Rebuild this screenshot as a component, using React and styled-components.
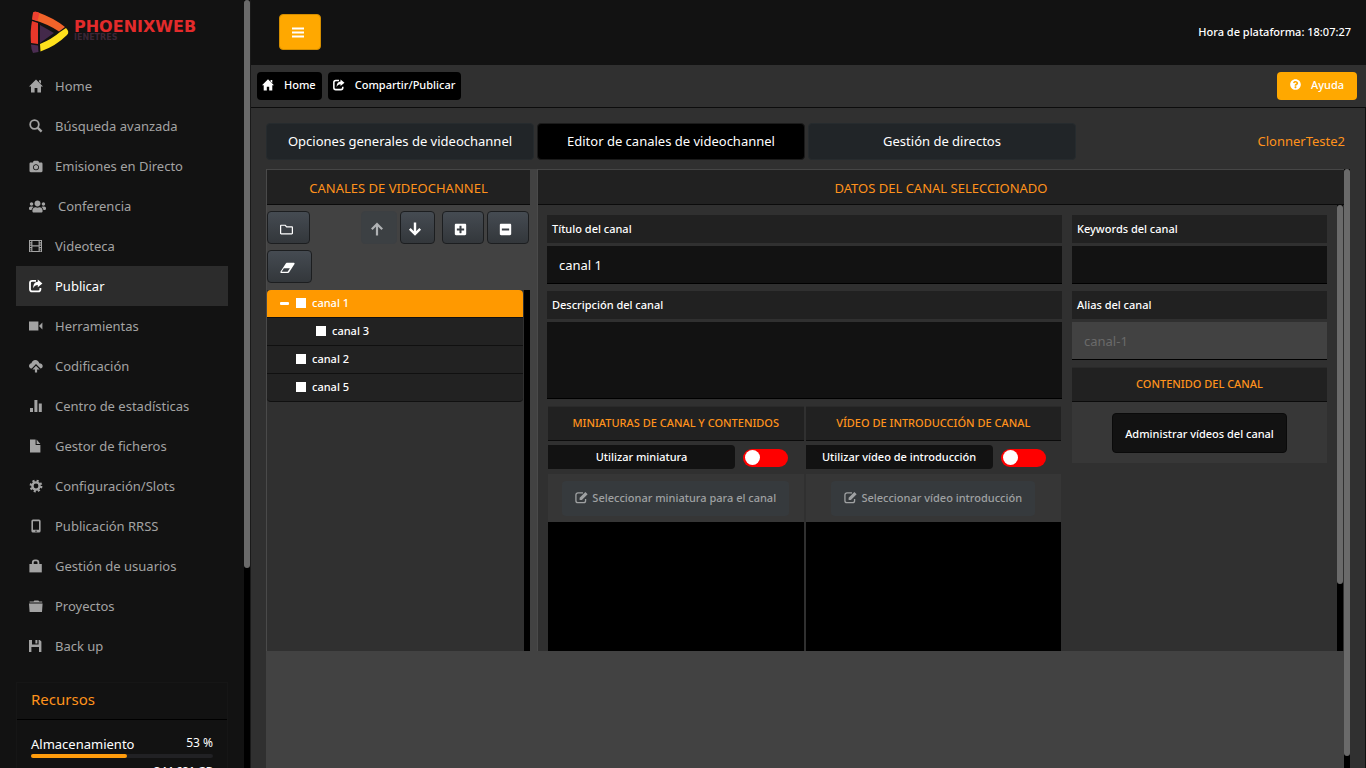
import React from 'react';
import styled, { createGlobalStyle, css } from 'styled-components';
import {
  FaUsers,
  FaPlusSquare,
  FaMinusSquare,
  FaQuestionCircle,
  FaRegFolder,
  FaCamera,
} from 'react-icons/fa';

const GlobalStyle = createGlobalStyle`
  * {
    box-sizing: border-box;
  }

  html, body, #root {
    height: 100%;
    margin: 0;
  }

  body {
    overflow: hidden;
    background: #2f2f2f;
    color: #fff;
    font-family: 'Noto Sans', sans-serif;
    font-size: 13px;
  }

  button, input, textarea {
    font-family: inherit;
  }

  svg {
    display: block;
    flex: none;
  }
`;

const Page = styled.div`
  display: flex;
  height: 100vh;
  overflow: hidden;
`;

const Sidebar = styled.aside`
  flex: none;
  display: flex;
  width: 250px;
  height: 100%;
  background: #121212;
  overflow: hidden;
`;

const SidebarContent = styled.div`
  flex: 1;
  padding: 0 16px;
`;

const ScrollTrack = styled.div`
  flex: none;
  width: 6px;
  background: #000;
`;

const ScrollThumb = styled.div`
  height: ${({ $size }) => $size};
  border-radius: 3px;
  background: #6a6a6a;
`;

const Logo = styled.a`
  display: flex;
  align-items: flex-start;
  height: 66px;
  padding: 11px 0 0 14px;
  gap: 4px;
  text-decoration: none;
`;

const LogoText = styled.div`
  padding-top: 9px;
  color: #e32b2b;
  font-family: 'DejaVu Sans', sans-serif;
  font-size: 16px;
  font-weight: bold;
  line-height: 14px;

  small {
    display: block;
    color: #3a2636;
    font-size: 8px;
    line-height: 8px;
  }
`;

const Nav = styled.nav`
  display: flex;
  flex-direction: column;
`;

const NavLink = styled.a`
  display: flex;
  align-items: center;
  gap: 12px;
  height: 40px;
  padding-left: 13px;
  color: ${({ $active }) => ($active ? '#fff' : '#a3a3a3')};
  background: ${({ $active }) => ($active ? '#2c2c2c' : 'transparent')};
  text-decoration: none;

  svg {
    min-width: 14px;
  }
`;

const Resources = styled.section`
  margin-top: 16px;
  border: 1px solid #161616;
`;

const ResourcesTitle = styled.h2`
  margin: 0;
  padding: 0 14px 3px;
  border-bottom: 1px solid #000;
  color: #ff921c;
  font-size: 15px;
  font-weight: 400;
  line-height: 33px;
`;

const Resource = styled.div`
  padding: 14px 14px 0;
`;

const ResourceLabel = styled.div`
  display: flex;
  justify-content: space-between;
  line-height: 20px;

  span {
    font-size: 12px;
    line-height: 18px;
  }
`;

const Bar = styled.div`
  height: 4px;
  border-radius: 2px;
  background: #212124;
`;

const BarFill = styled.div`
  height: 4px;
  border-radius: 2px;
  background: #ff9c0c;
`;

const ResourceDetail = styled.div`
  padding-top: 5px;
  font-size: 11px;
  font-weight: 600;
  line-height: 16px;
  text-align: right;
`;

const Main = styled.main`
  flex: 1;
  display: flex;
  flex-direction: column;
  min-width: 0;
  border-left: 1px solid #1a1a1a;
`;

const TopBar = styled.header`
  flex: none;
  display: flex;
  align-items: center;
  justify-content: space-between;
  height: 65px;
  padding: 0 15px 2px 28px;
  background: #121212;
  font-size: 11px;
  font-weight: 500;
`;

const MenuButton = styled.button`
  display: flex;
  align-items: center;
  width: 42px;
  height: 36px;
  padding: 0 0 0 11px;
  border: 1px solid #d38d00;
  border-radius: 4px;
  color: #fff;
  background: #ffa800;
`;

const Breadcrumbs = styled.div`
  flex: none;
  display: flex;
  align-items: center;
  gap: 6px;
  height: 43px;
  padding: 0 9px 0 6px;
  border-bottom: 1px solid #0c0c0c;
  background: #303030;
`;

const Crumb = styled.a`
  display: flex;
  align-items: center;
  gap: 10px;
  height: 28px;
  padding: 0 6px 3px 5px;
  border-radius: 4px;
  color: #fff;
  background: #000;
  font-size: 11px;
  font-weight: 500;
  text-decoration: none;
`;

const HelpButton = styled.button`
  display: flex;
  align-items: center;
  gap: 10px;
  height: 28px;
  margin-left: auto;
  padding: 0 13px 3px;
  border: none;
  border-radius: 4px;
  color: #fff;
  background: #ffa800;
  font-size: 11px;
  font-weight: 500;
`;

const Content = styled.div`
  flex: 1;
  display: flex;
  flex-direction: column;
  min-height: 0;
  padding: 15px 15px 0;
  border-right: 1px solid #111;
  background: #303030;
`;

const TabBar = styled.div`
  display: flex;
  align-items: center;
  gap: 3px;
`;

const Tab = styled.button`
  flex: 0 1 268px;
  height: 37px;
  padding: 0 0 2px;
  border: 1px solid ${({ $active }) => ($active ? '#1b1b1b' : '#262b2e')};
  border-radius: 4px;
  color: #fff;
  background: ${({ $active }) => ($active ? '#000' : '#212528')};
  font-size: 13px;
`;

const UserName = styled.span`
  margin-left: auto;
  padding: 0 5px 2px 0;
  color: #ff921c;
`;

const Workspace = styled.div`
  flex: 1;
  display: flex;
  min-height: 0;
  margin-top: 9px;
`;

const WorkspaceBody = styled.div`
  flex: 1;
  display: flex;
  align-items: flex-start;
  gap: 7px;
  min-width: 0;
  background: #424242;
`;

const Panel = styled.section`
  display: flex;
  flex-direction: column;
  height: 482px;
  min-width: 0;
  border-left: 1px solid #4a4a4a;
  background: #303030;
  ${({ $grow }) => ($grow ? 'flex: 1;' : 'flex: 0 0 264px;')}
`;

const PanelTitle = styled.h2`
  flex: none;
  margin: 0;
  padding-top: 2px;
  border-top: 1px solid #464646;
  border-bottom: 1px solid #0b0b0b;
  color: #ff921c;
  background: #212121;
  font-size: 13px;
  font-weight: 400;
  line-height: 32px;
  text-align: center;
`;

const SmallTitle = styled(PanelTitle)`
  padding: 0 0 2px;
  border-top-color: #2a2a2a;
  font-size: 11px;
  font-weight: 500;
  line-height: 31px;
`;

const Toolbar = styled.div`
  flex: none;
  display: flex;
  flex-wrap: wrap;
  align-content: flex-start;
  gap: 6px 3px;
  height: 85px;
  padding-top: 6px;
  background: #424242;
`;

const ToolButton = styled.button`
  display: flex;
  align-items: center;
  justify-content: center;
  width: ${({ $width }) => $width}px;
  height: 33px;
  margin-right: ${({ $gap }) => $gap || 0}px;
  padding: 3px 5px 0 0;
  border: 1px solid #1c1e20;
  border-radius: 4px;
  color: #fff;
  background: linear-gradient(#454b52, #33373b);

  &:disabled {
    border-color: #3c3f42;
    color: #b0b2b4;
    background: #3c4043;
  }
`;

const TreeArea = styled.div`
  flex: 1;
  display: flex;
`;

const Tree = styled.ul`
  flex: 1;
  margin: 0;
  padding: 0 1px 0 0;
  list-style: none;
`;

const TreeItem = styled.li`
  display: flex;
  align-items: center;
  gap: 5px;
  height: 28px;
  padding: 0 0 2px ${({ $level }) => 29 + $level * 20}px;
  border-bottom: 1px solid #101010;
  background: #222;
  font-size: 11px;
  font-weight: 500;

  &:last-child {
    border-radius: 0 0 4px 4px;
  }

  ${({ $selected }) =>
    $selected &&
    css`
      padding-left: 12px;
      border-radius: 4px 4px 0 0;
      background: #ff9900;
    `}

  label {
    display: flex;
    align-items: center;
    gap: 6px;
  }

  input {
    appearance: none;
    width: 10px;
    height: 10px;
    margin: 0;
    background: #fff;
  }
`;

const TreeToggle = styled.button`
  display: flex;
  width: 12px;
  padding: 0 1px;
  border: none;
  color: #fff;
  background: none;
`;

const FormArea = styled.div`
  flex: 1;
  display: flex;
  min-height: 0;
  padding-right: 1px;
`;

const Form = styled.form`
  flex: 1;
  display: grid;
  grid-template-columns: minmax(0, 515px) minmax(0, 255px);
  gap: 10px;
  padding: 10px 10px 0 9px;
  overflow: hidden;
`;

const Column = styled.div`
  display: flex;
  flex-direction: column;
`;

const FieldLabel = styled.label`
  height: 28px;
  padding-left: 5px;
  background: #212121;
  font-size: 11px;
  font-weight: 500;
  line-height: 28px;
`;

const fieldStyles = css`
  width: 100%;
  margin: 3px 0 7px;
  padding: 0 12px;
  border: none;
  border-bottom: 1px solid #000;
  border-radius: 0;
  outline: none;
  color: #fff;
  background: #121212;
  font-size: 13px;
`;

const TextInput = styled.input`
  ${fieldStyles}
  height: 38px;

  &:disabled {
    color: #6a6a6a;
    background: #424242;
  }
`;

const TextArea = styled.textarea`
  ${fieldStyles}
  height: 77px;
  resize: none;
`;

const MediaRow = styled.div`
  display: grid;
  grid-template-columns: 1fr 1fr;
  gap: 2px;
  padding: 0 1px;
`;

const Media = styled.div`
  display: flex;
  flex-direction: column;
`;

const SwitchRow = styled.div`
  display: flex;
  align-items: center;
  gap: 8px;
  height: 33px;
  padding-bottom: 2px;
`;

const SwitchLabel = styled.label`
  width: 187px;
  border-radius: 0 4px 4px 0;
  background: #121212;
  font-size: 11px;
  font-weight: 500;
  line-height: 24px;
  text-align: center;
`;

const Switch = styled.input`
  appearance: none;
  display: flex;
  align-items: center;
  width: 45px;
  height: 18px;
  margin: 2px 0 0;
  padding-left: 2px;
  border-radius: 9px;
  background: #f00;

  &::before {
    content: '';
    width: 15px;
    height: 15px;
    border-radius: 50%;
    background: #fff;
  }
`;

const MediaAction = styled.div`
  display: flex;
  align-items: center;
  justify-content: center;
  height: 48px;
  background: #363636;
`;

const SelectButton = styled.button`
  display: flex;
  align-items: center;
  gap: 4px;
  height: 35px;
  padding: 0 13px 2px;
  border: none;
  border-radius: 4px;
  color: #9fa1a2;
  background: #363a3d;
  font-size: 11px;
  font-weight: 500;
`;

const Preview = styled.div`
  height: 140px;
  background: #000;
`;

const ChannelContent = styled.div`
  height: 96px;
  background: #373737;
  text-align: center;
`;

const ManageButton = styled.button`
  height: 40px;
  margin-top: 11px;
  padding: 0 12px;
  border: 1px solid #0a0a0a;
  border-radius: 4px;
  color: #fff;
  background: #121212;
  font-size: 11px;
  font-weight: 500;
`;

const Glyph = ({ children, size = 14 }) => (
  <svg width={size} height={size} viewBox="0 0 14 14" fill="currentColor" aria-hidden="true">
    {children}
  </svg>
);

const HomeIcon = ({ size }) => (
  <Glyph size={size}>
    <path d="M7 .4 14 7.400H12V13.400H8.400V9H5.600v4.400H2V7.400H0zM10 1.200h2v3.600l-2-2z" />
  </Glyph>
);

const SearchIcon = () => (
  <Glyph>
    <circle cx="5.5" cy="5.5" r="4.3" fill="none" stroke="currentColor" strokeWidth="1.8" />
    <path d="M8.6 8.6 12.6 12.6" stroke="currentColor" strokeWidth="2.4" />
  </Glyph>
);

const FilmIcon = () => (
  <Glyph>
    <path
      fillRule="evenodd"
      d="M0 1h13v12H0zM1 2v1.2h1.3V2zM1 4.4v1.2h1.3V4.4zM1 6.8V8h1.3V6.8zM1 9.2v1.2h1.3V9.2zM1 11.3v1h1.3v-1zM10.7 2v1.2H12V2zM10.7 4.4v1.2H12V4.4zM10.7 6.8V8H12V6.8zM10.7 9.2v1.2H12V9.2zM10.7 11.3v1H12v-1zM3.4 2v4.2h6.2V2zM3.4 7.6V12h6.2V7.6z"
    />
  </Glyph>
);

const ShareIcon = ({ size }) => (
  <Glyph size={size}>
    <path
      d="M7 1.8H3.2A2.2 2.2 0 0 0 1 4v6.2a2.2 2.2 0 0 0 2.2 2.2h6a2.2 2.2 0 0 0 2.2-2.2V9"
      fill="none"
      stroke="currentColor"
      strokeWidth="1.8"
    />
    <path d="M8.8.6 13.4 4.4 8.8 8.2V6C6.6 6 5.4 7 4.2 9.2 4.2 5.4 5.8 3 8.8 2.8z" />
  </Glyph>
);

const VideoIcon = () => (
  <Glyph>
    <path d="M0 2.5h9.4v9H0zM10 7l3.4-3.6v7.2z" />
  </Glyph>
);

const CloudUploadIcon = () => (
  <Glyph>
    <path d="M2.800 9.600C1.200 9.400 0 8.300 0 6.900c0-1.400 1-2.500 2.400-2.700C2.900 2.300 4.400 1 6.300 1c2 0 3.600 1.300 4 3.200 1.900 0 3.400 1.200 3.400 2.800 0 1.300-.9 2.400-2.200 2.600L7 5z" />
    <path d="m7 6.700 3.600 3.700H8.100v3.200H5.900v-3.200H3.400z" />
  </Glyph>
);

const StatsIcon = () => (
  <Glyph>
    <path d="M1 9h3v4H1zM5.4 1h3v12h-3zM9.8 4.4h3V13h-3z" />
  </Glyph>
);

const FileIcon = () => (
  <Glyph>
    <path d="M1 .4h5.600V6H11.400v7.400H1zM7.600.4 11.400 5H7.600z" />
  </Glyph>
);

const CogIcon = () => (
  <Glyph>
    <circle cx="7" cy="7" r="5.200" fill="none" stroke="currentColor" strokeWidth="2.400" strokeDasharray="2.040 2.040" />
    <circle cx="7" cy="7" r="3.600" fill="none" stroke="currentColor" strokeWidth="2.400" />
  </Glyph>
);

const PhoneIcon = () => (
  <Glyph>
    <path
      fillRule="evenodd"
      d="M4 .5h6A1.6 1.6 0 0 1 11.6 2v10a1.6 1.6 0 0 1-1.6 1.5H4A1.6 1.6 0 0 1 2.4 12V2A1.6 1.6 0 0 1 4 .5zM4 2.2v8.6h6V2.2zM6 11.8v.8h2v-.8z"
    />
  </Glyph>
);

const LockIcon = () => (
  <Glyph>
    <path d="M.4 5h12.400v8.400H.4z" />
    <path
      d="M3.8 5.4V3.6c0-1.400.8-2.200 2.200-2.200h1.200c1.400 0 2.200.8 2.200 2.200v1.800"
      fill="none"
      stroke="currentColor"
      strokeWidth="1.8"
    />
  </Glyph>
);

const ProjectsIcon = () => (
  <Glyph>
    <path d="M.6 2.400h4l.8-1h4l.8 1h3v1.200H.6zM0 4.600h13.600L13 13H.6z" />
  </Glyph>
);

const SaveIcon = () => (
  <Glyph>
    <path d="M0 1h3v4.600h6.600V1h1.200L12.400 2.600V13H10V8H2.400v5H0zM6.400 1h2v3.600h-2z" />
  </Glyph>
);

const BarsIcon = () => (
  <Glyph>
    <path d="M1 2.500h12v2H1zM1 6.500h12v2H1zM1 10.500h12v2H1z" />
  </Glyph>
);

const ArrowUpIcon = () => (
  <Glyph>
    <path d="M7 13.400V2M1.800 7.200 7 2l5.200 5.200" fill="none" stroke="currentColor" strokeWidth="2.200" />
  </Glyph>
);

const ArrowDownIcon = () => (
  <Glyph>
    <path d="M7 .6V12M1.800 6.800 7 12l5.200-5.200" fill="none" stroke="currentColor" strokeWidth="2.400" />
  </Glyph>
);

const EraserIcon = () => (
  <svg width="15" height="14" viewBox="0 0 15 14" fill="currentColor" aria-hidden="true">
    <path fillRule="evenodd" d="M6.600 1.800H14Q15 2 14.500 3L9 11.400 8 12H1Q0 11.800.4 10.800L5.800 2.400zM3.900 7.200 1.600 10.800H7.600L9.900 7.200z" />
  </svg>
);

const EditIcon = () => (
  <Glyph size={13}>
    <path
      d="M8.600 2H3.200A2.200 2.200 0 0 0 1 4.200v6.200a2.200 2.200 0 0 0 2.200 2.200h6a2.200 2.200 0 0 0 2.200-2.200V8.600"
      fill="none"
      stroke="currentColor"
      strokeWidth="1.400"
    />
    <path d="M5 7.400 11.200 1.200 13.600 3.600 7.400 9.800H5z" />
  </Glyph>
);

const MinusIcon = () => (
  <svg width="10" height="10" viewBox="0 0 10 10" fill="currentColor" aria-hidden="true">
    <rect y="4" width="9" height="3" rx="1" />
  </svg>
);

const LogoMark = () => (
  <svg width="40" height="43" viewBox="0 0 40 43" aria-hidden="true">
    <path d="M10 14 24 22 10 32z" fill="#43294a" />
    <path d="M2 10 8 12V33L1 32Q0 20 2 10z" fill="#e8382a" />
    <path d="M1 33.500 8 34.500 8.500 41 3 42Q1 38 1 33.500z" fill="#4b2d52" />
    <path d="M3 2Q4 0 7 1 24 7 35 16L29 20.500Q18 13 2.300 8.500z" fill="#f1632a" />
    <path d="M3 2Q4 0 7 1L9.500 2 7.500 10 2.300 8.500z" fill="#ee4030" />
    <path d="M36 17q4 4 1 7Q26 35 10.500 40.500L10 33Q22 28 30 21z" fill="#ffe11c" />
  </svg>
);

const navItems = [
  { label: 'Home', icon: <HomeIcon /> },
  { label: 'Búsqueda avanzada', icon: <SearchIcon /> },
  { label: 'Emisiones en Directo', icon: <FaCamera size={13} /> },
  { label: 'Conferencia', icon: <FaUsers size={17} /> },
  { label: 'Videoteca', icon: <FilmIcon /> },
  { label: 'Publicar', icon: <ShareIcon />, active: true },
  { label: 'Herramientas', icon: <VideoIcon /> },
  { label: 'Codificación', icon: <CloudUploadIcon /> },
  { label: 'Centro de estadísticas', icon: <StatsIcon /> },
  { label: 'Gestor de ficheros', icon: <FileIcon /> },
  { label: 'Configuración/Slots', icon: <CogIcon /> },
  { label: 'Publicación RRSS', icon: <PhoneIcon /> },
  { label: 'Gestión de usuarios', icon: <LockIcon /> },
  { label: 'Proyectos', icon: <ProjectsIcon /> },
  { label: 'Back up', icon: <SaveIcon /> },
];

const channels = [
  { id: 1, name: 'canal 1', level: 0, selected: true },
  { id: 3, name: 'canal 3', level: 1 },
  { id: 2, name: 'canal 2', level: 0 },
  { id: 5, name: 'canal 5', level: 0 },
];

const storage = 53;

const MediaBlock = ({ id, title, switchLabel, action }) => (
  <Media>
    <SmallTitle as="h3">{title}</SmallTitle>
    <SwitchRow>
      <SwitchLabel htmlFor={id}>{switchLabel}</SwitchLabel>
      <Switch type="checkbox" role="switch" id={id} />
    </SwitchRow>
    <MediaAction>
      <SelectButton type="button">
        <EditIcon />
        {action}
      </SelectButton>
    </MediaAction>
    <Preview />
  </Media>
);

const App = () => (
  <Page>
    <GlobalStyle />
    <Sidebar>
      <SidebarContent>
        <Logo href="#">
          <LogoMark />
          <LogoText>
            PHOENIXWEB
            <small>IENETRES</small>
          </LogoText>
        </Logo>
        <Nav>
          {navItems.map(({ label, icon, active }) => (
            <NavLink key={label} href="#" $active={active}>
              {icon}
              {label}
            </NavLink>
          ))}
        </Nav>
        <Resources>
          <ResourcesTitle>Recursos</ResourcesTitle>
          <Resource>
            <ResourceLabel>
              Almacenamiento
              <span>{storage} %</span>
            </ResourceLabel>
            <Bar>
              <BarFill style={{ width: `${storage}%` }} />
            </Bar>
            <ResourceDetail>344.681 GB</ResourceDetail>
          </Resource>
        </Resources>
      </SidebarContent>
      <ScrollTrack>
        <ScrollThumb $size="74%" />
      </ScrollTrack>
    </Sidebar>
    <Main>
      <TopBar>
        <MenuButton type="button" aria-label="Menu">
          <BarsIcon />
        </MenuButton>
        <span>Hora de plataforma: 18:07:27</span>
      </TopBar>
      <Breadcrumbs>
        <Crumb href="#">
          <HomeIcon size={12} />
          Home
        </Crumb>
        <Crumb href="#">
          <ShareIcon size={12} />
          Compartir/Publicar
        </Crumb>
        <HelpButton type="button">
          <FaQuestionCircle size={11} />
          Ayuda
        </HelpButton>
      </Breadcrumbs>
      <Content>
        <TabBar>
          <Tab type="button">Opciones generales de videochannel</Tab>
          <Tab type="button" $active>
            Editor de canales de videochannel
          </Tab>
          <Tab type="button">Gestión de directos</Tab>
          <UserName>ClonnerTeste2</UserName>
        </TabBar>
        <Workspace>
          <WorkspaceBody>
            <Panel>
              <PanelTitle>CANALES DE VIDEOCHANNEL</PanelTitle>
              <Toolbar>
                <ToolButton type="button" $width={43} $gap={48} aria-label="Carpeta">
                  <FaRegFolder size={13} />
                </ToolButton>
                <ToolButton type="button" $width={36} disabled aria-label="Subir">
                  <ArrowUpIcon />
                </ToolButton>
                <ToolButton type="button" $width={35} $gap={4} aria-label="Bajar">
                  <ArrowDownIcon />
                </ToolButton>
                <ToolButton type="button" $width={42} aria-label="Añadir">
                  <FaPlusSquare size={13} />
                </ToolButton>
                <ToolButton type="button" $width={42} aria-label="Quitar">
                  <FaMinusSquare size={13} />
                </ToolButton>
                <ToolButton type="button" $width={45} aria-label="Borrar">
                  <EraserIcon />
                </ToolButton>
              </Toolbar>
              <TreeArea>
                <Tree>
                  {channels.map(({ id, name, level, selected }) => (
                    <TreeItem key={id} $level={level} $selected={selected}>
                      {selected && (
                        <TreeToggle type="button" aria-label="Contraer">
                          <MinusIcon />
                        </TreeToggle>
                      )}
                      <label>
                        <input type="checkbox" />
                        {name}
                      </label>
                    </TreeItem>
                  ))}
                </Tree>
                <ScrollTrack />
              </TreeArea>
            </Panel>
            <Panel $grow>
              <PanelTitle>DATOS DEL CANAL SELECCIONADO</PanelTitle>
              <FormArea>
                <Form>
                  <Column>
                    <FieldLabel htmlFor="title">Título del canal</FieldLabel>
                    <TextInput id="title" defaultValue="canal 1" />
                    <FieldLabel htmlFor="description">Descripción del canal</FieldLabel>
                    <TextArea id="description" />
                    <MediaRow>
                      <MediaBlock
                        id="thumbnail"
                        title="MINIATURAS DE CANAL Y CONTENIDOS"
                        switchLabel="Utilizar miniatura"
                        action="Seleccionar miniatura para el canal"
                      />
                      <MediaBlock
                        id="intro"
                        title="VÍDEO DE INTRODUCCIÓN DE CANAL"
                        switchLabel="Utilizar vídeo de introducción"
                        action="Seleccionar vídeo introducción"
                      />
                    </MediaRow>
                  </Column>
                  <Column>
                    <FieldLabel htmlFor="keywords">Keywords del canal</FieldLabel>
                    <TextInput id="keywords" />
                    <FieldLabel htmlFor="alias">Alias del canal</FieldLabel>
                    <TextInput id="alias" defaultValue="canal-1" disabled />
                    <ChannelContent>
                      <SmallTitle as="h3">CONTENIDO DEL CANAL</SmallTitle>
                      <ManageButton type="button">Administrar vídeos del canal</ManageButton>
                    </ChannelContent>
                  </Column>
                </Form>
                <ScrollTrack>
                  <ScrollThumb $size="85%" />
                </ScrollTrack>
              </FormArea>
            </Panel>
          </WorkspaceBody>
          <ScrollTrack>
            <ScrollThumb $size="98%" />
          </ScrollTrack>
        </Workspace>
      </Content>
    </Main>
  </Page>
);

export default App;
